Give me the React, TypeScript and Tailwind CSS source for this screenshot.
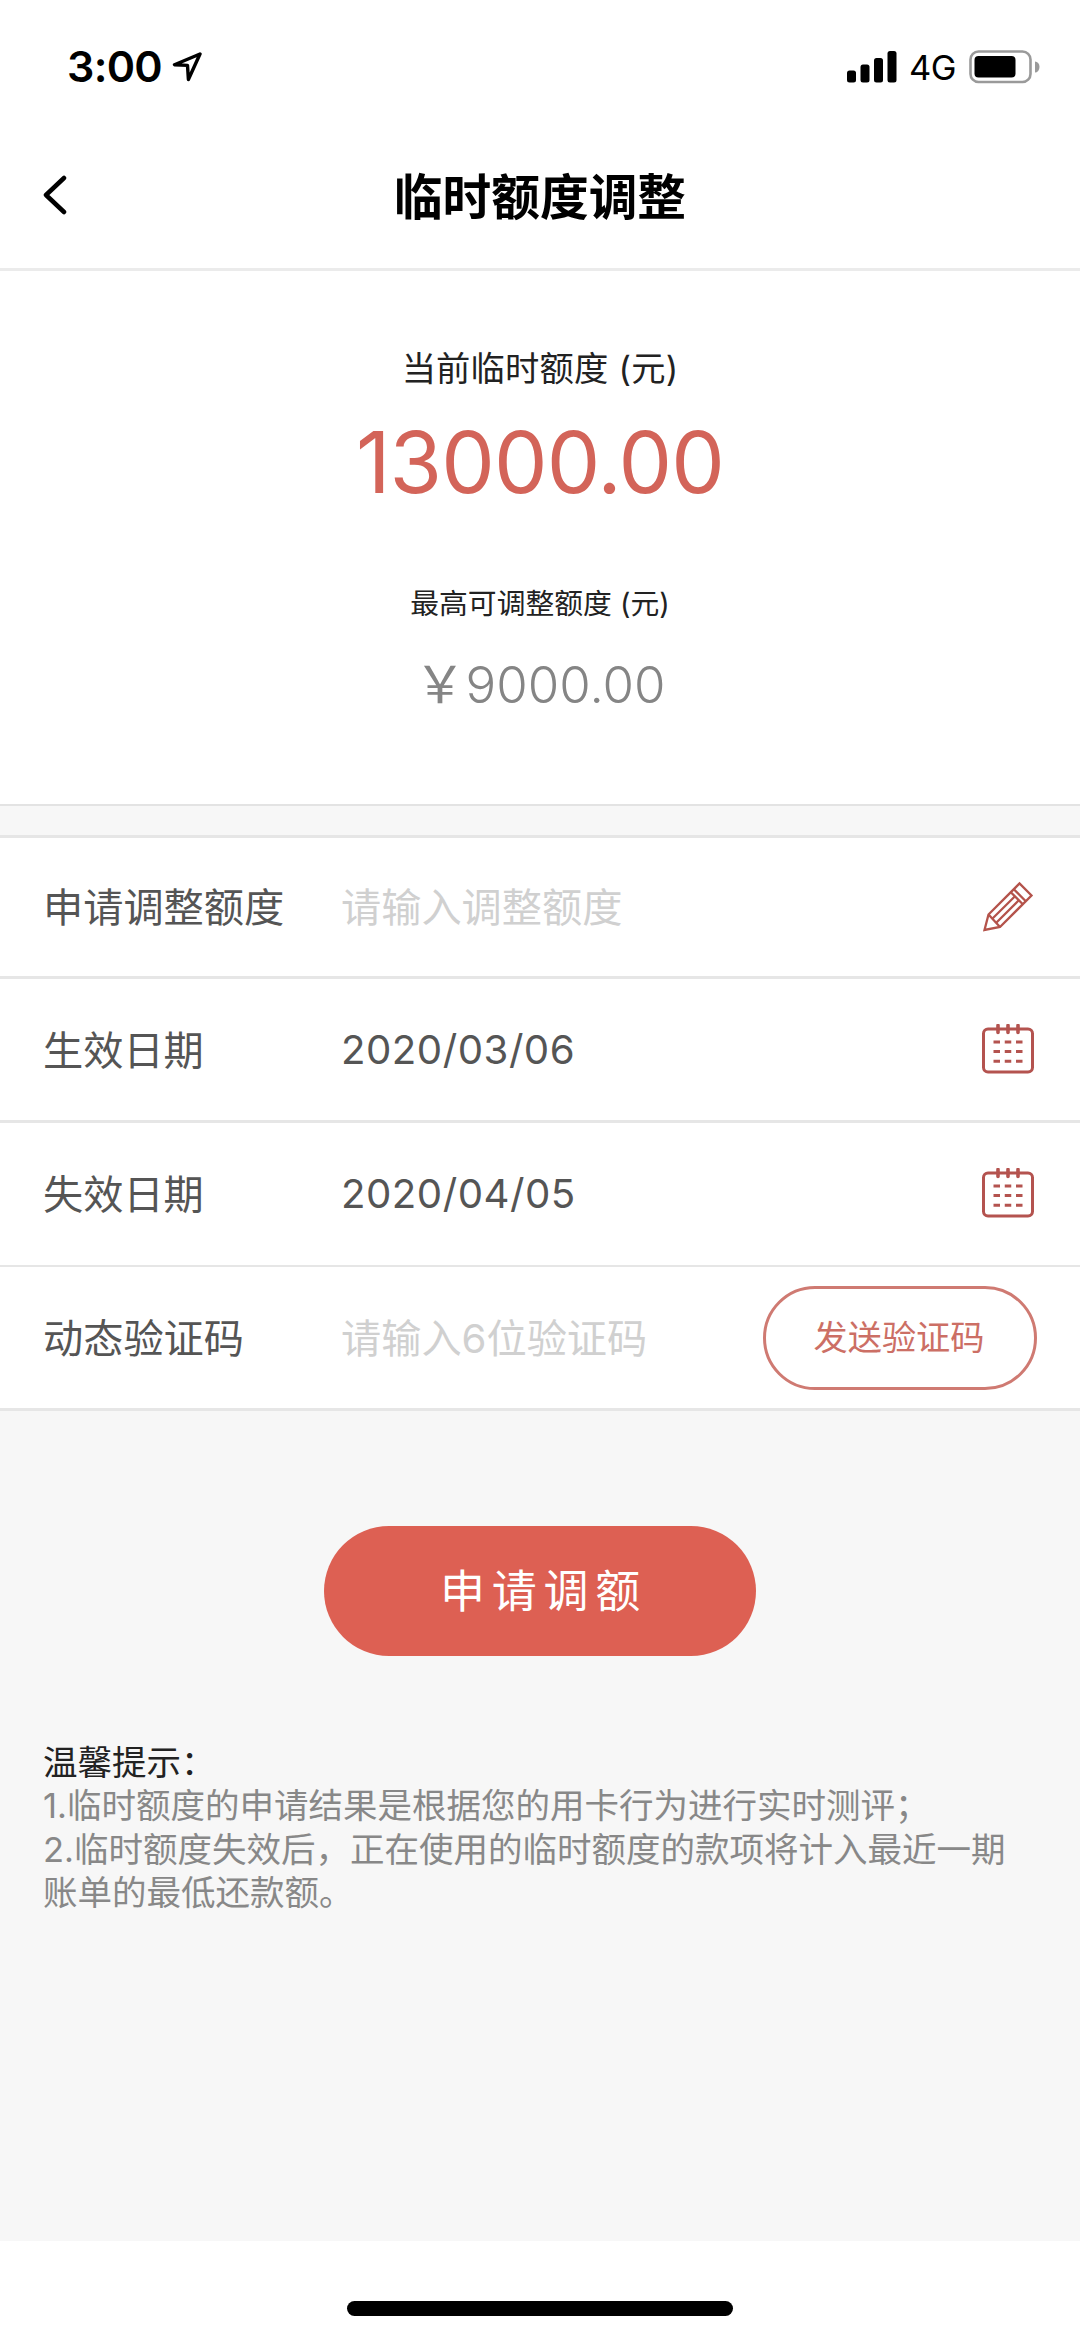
import { ReactNode } from "react";

type RowProps = {
  label: string;
  value: string;
  placeholder?: boolean;
  className: string;
  children: ReactNode;
};

const tips = [
  "1.临时额度的申请结果是根据您的用卡行为进行实时测评；",
  "2.临时额度失效后，正在使用的临时额度的款项将计入最近一期账单的最低还款额。",
];

const StatusBar = () => (
  <div className="h-[133px] pl-[67px] pr-[40px] pt-[40px] flex items-start justify-between text-black">
    <div className="flex items-center h-[53px]">
      <span className="w-[95px] text-[43px] leading-[53px] font-semibold tracking-[-0.7px]">3:00</span>
      <svg className="w-[30px] h-[30px] ml-[10px]" viewBox="0 0 30 30" fill="none">
        <path
          d="M28 2 L2.500 12.700 L15.500 13.400 L16.400 27.500 Z"
          stroke="currentColor"
          strokeWidth="3.4"
          strokeLinejoin="round"
        />
      </svg>
    </div>
    <div className="flex items-center h-[53px]">
      <svg className="w-[50px] h-[32px]" viewBox="0 0 50 32" fill="currentColor">
        <rect x="0" y="19.500" width="9" height="12" rx="2.5" />
        <rect x="13.5" y="13.500" width="9" height="18" rx="2.5" />
        <rect x="27" y="7" width="9" height="24.500" rx="2.5" />
        <rect x="40.5" y="0" width="9" height="31.500" rx="2.500" />
      </svg>
      <span className="ml-[12px] w-[48px] text-[34.5px] leading-[53px] pt-[2px] tracking-[-0.5px]">4G</span>
      <svg className="w-[71px] h-[34px] ml-[12px]" viewBox="0 0 71 34">
        <rect x="1.500" y="1.500" width="60" height="30.500" rx="8" fill="none" stroke="#9a9a9a" strokeWidth="2.6" />
        <rect x="5.500" y="6" width="41" height="21.500" rx="4" fill="#000" />
        <path d="M66 11.500 a4.500 5.500 0 0 1 0 11 Z" fill="#9a9a9a" />
      </svg>
    </div>
  </div>
);

const PencilIcon = () => (
  <svg className="w-[52px] h-[52px]" viewBox="0 0 52 52" fill="none" stroke="#b4534b" strokeWidth="2.300">
    <path d="M2.500 49 L6.500 33.500 L37.500 2.500 L49.500 14.500 L18 46 Z" />
    <path d="M6.500 33.500 L18 46" />
    <path d="M28.800 11.200 L40.800 23.200 M31.800 8.200 L43.800 20.200" />
    <path d="M10.500 37.500 L33 15.300 M14.500 41.500 L36.800 19.200" />
  </svg>
);

const CalendarIcon = () => (
  <svg className="w-[52px] h-[50px] mb-[2px]" viewBox="0 0 52 50" fill="none" stroke="#b4534f" strokeWidth="3">
    <rect x="1.500" y="5" width="49" height="43" rx="4.500" />
    <path d="M16 1.500 v7 M26 1.500 v7 M36 1.500 v7" strokeWidth="3.600" strokeLinecap="round" />
    <path d="M11.500 18 h29 M11.500 27.500 h29 M11.500 37.200 h29" strokeDasharray="6.5 4.75" />
  </svg>
);

const Row = ({ label, value, placeholder, className, children }: RowProps) => (
  <div className={`flex items-center pl-[43px] bg-white border-[#e6e6e6] ${className}`}>
    <span className="w-[298px] pt-[2px] text-[40.200px] leading-[60px] text-[#555]">{label}</span>
    <span
      className={`flex-1 text-[40.200px] leading-[60px] ${placeholder ? "pt-[2px] text-[#d0d0d0]" : "text-[#555] tracking-[0.500px]"}`}
    >
      {value}
    </span>
    {children}
  </div>
);

const App = () => {
  return (
    <div
      lang="zh-CN"
      className="w-[1080px] h-[2339px] flex flex-col bg-white font-['Inter','Noto_Sans_CJK_SC',sans-serif]"
    >
      <StatusBar />

      {/* Nav bar */}
      <header className="h-[138px] px-[42px] pb-[5px] grid grid-cols-[60px_1fr_60px] items-center border-b-[3px] border-[#ebebeb] text-black">
        <svg className="w-[26px] h-[40px] mb-[6px]" viewBox="0 0 26 40" fill="none">
          <path
            d="M22 3 L4 20 L22 37"
            stroke="currentColor"
            strokeWidth="4.500"
            strokeLinecap="round"
            strokeLinejoin="round"
          />
        </svg>
        <h1 className="text-center text-[48.700px] leading-[70px] font-bold">临时额度调整</h1>
      </header>

      {/* Current and maximum limit */}
      <section className="h-[535px] pt-[73px] flex flex-col items-center border-b-2 border-[#e3e3e3]">
        <p className="text-[34.300px] leading-[50px] text-[#222] tracking-[0.200px]">当前临时额度 (元)</p>
        <p className="mt-[17px] text-[85px] leading-[104px] text-[#d36459] tracking-[-0.900px]">13000.00</p>
        <p className="mt-[67px] text-[28.800px] leading-[44px] text-[#222]">最高可调整额度 (元)</p>
        <p className="mt-[24px] text-[51px] leading-[70px] text-[#858585] font-light">
          <span className="font-normal">￥</span>9000.00
        </p>
      </section>

      <div className="h-[32px] bg-[#f7f7f7] border-b-[3px] border-[#e6e6e6]" />

      <Row label="申请调整额度" value="请输入调整额度" placeholder className="h-[141px] pr-[46px] border-b-[3px]">
        <PencilIcon />
      </Row>
      <Row label="生效日期" value="2020/03/06" className="h-[144px] pr-[46px] border-b-[3px]">
        <CalendarIcon />
      </Row>
      <Row label="失效日期" value="2020/04/05" className="h-[144px] pr-[46px] border-b-2">
        <CalendarIcon />
      </Row>
      <Row label="动态验证码" value="请输入6位验证码" placeholder className="h-[144px] pr-[43px] border-b-[3px]">
        <button className="w-[274px] h-[104px] pr-[2px] rounded-full border-[3px] border-[#cf7a72] text-[34.200px] leading-[50px] text-[#cc6f65]">
          发送验证码
        </button>
      </Row>

      <main className="flex-1 bg-[#f7f7f7] pt-[115px] px-[43px] flex flex-col">
        <button className="self-center w-[432px] h-[130px] rounded-full bg-[#dd6053] text-white text-[45px] leading-[64px] tracking-[6.800px] pl-[7px] pt-[2px]">
          申请调额
        </button>
        <div className="mt-[85px] text-[34.500px] leading-[43.400px] text-[#888]">
          <p className="text-[#222]">温馨提示：</p>
          {tips.map((tip) => (
            <p key={tip}>{tip}</p>
          ))}
        </div>
      </main>

      {/* Home indicator */}
      <footer className="h-[98px] pt-[60px] flex justify-center">
        <div className="w-[386px] h-[15px] rounded-full bg-black" />
      </footer>
    </div>
  );
};

export default App;
